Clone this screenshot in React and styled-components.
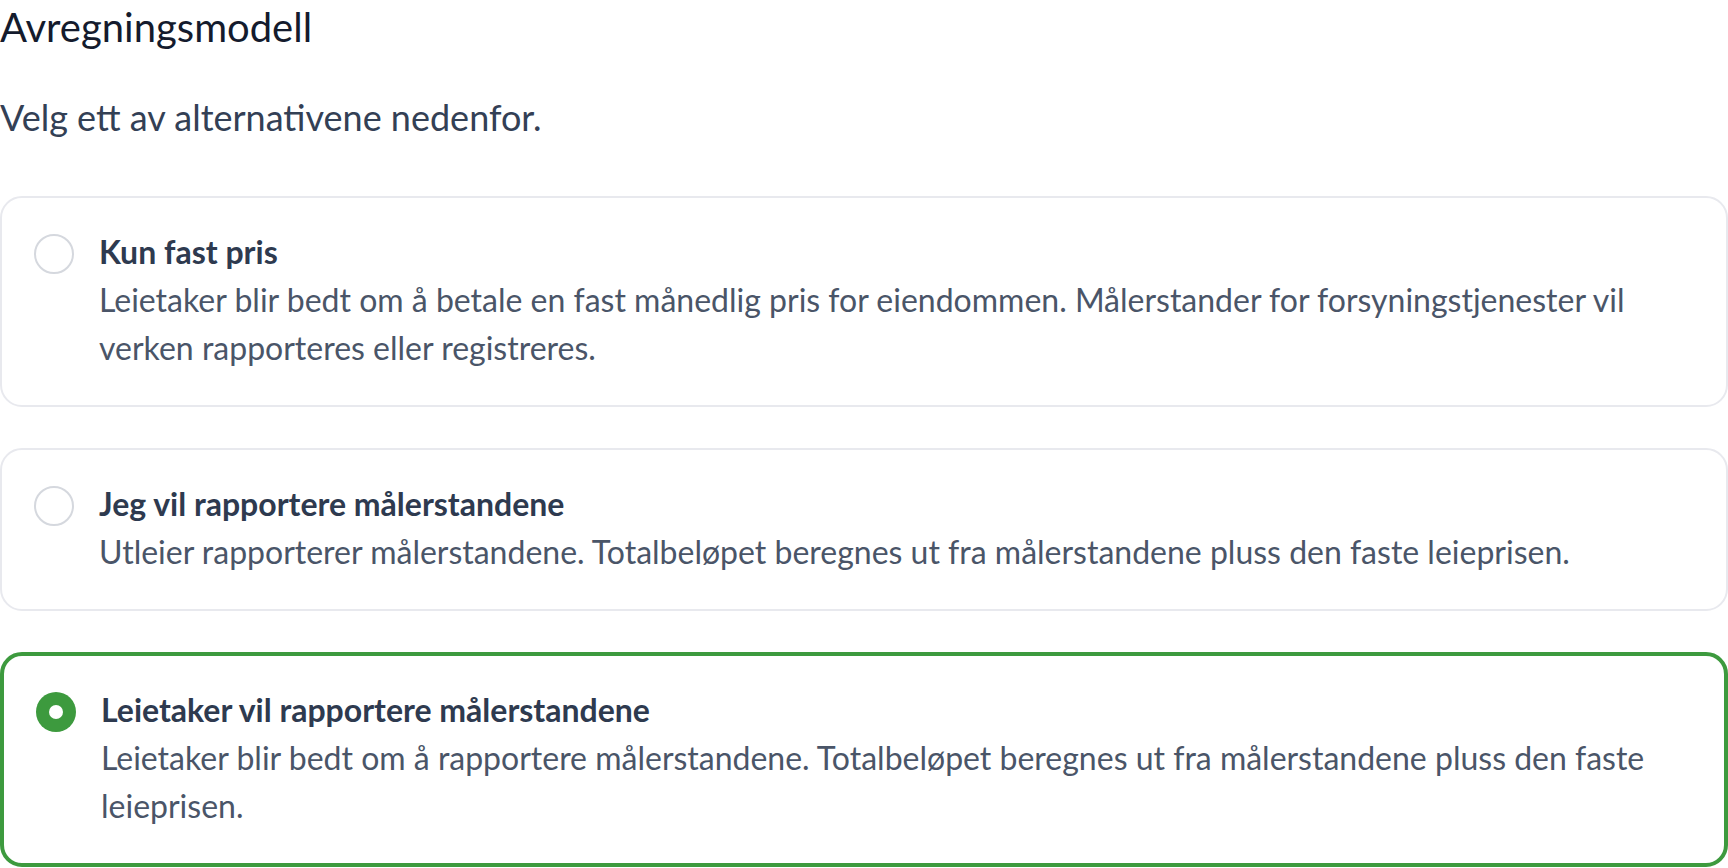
import React, { useState } from "react"
import styled, { createGlobalStyle } from "styled-components"

const GlobalStyle = createGlobalStyle`
    * {
        box-sizing: border-box;
    }

    body {
        margin: 0;
        background: #ffffff;
        font-family: "Lato", "Noto Sans", sans-serif;
    }
`

const Page = styled.div`
    width: 1728px;
`

const Title = styled.h1`
    margin: 0;
    font-size: 40px;
    font-weight: 400;
    line-height: 54px;
    color: #141b2d;
`

const Intro = styled.p`
    margin: 36px 0 52px;
    font-size: 36px;
    line-height: 54px;
    color: #334055;
`

const OptionList = styled.div`
    display: flex;
    flex-direction: column;
    gap: 41px;
`

const OptionCard = styled.label`
    display: flex;
    align-items: flex-start;
    gap: 25px;
    padding: 30px 32px 33px;
    border: ${props => (props.$selected ? "4px solid #3d9a3e" : "2px solid #e8e9ee")};
    border-radius: 22px;
    background: #ffffff;
    cursor: pointer;
`

const Radio = styled.span`
    flex: none;
    position: relative;
    width: 40px;
    height: 40px;
    margin-top: 6px;
    border-radius: 50%;
    border: ${props => (props.$checked ? "none" : "2px solid #d5d8de")};
    background: ${props => (props.$checked ? "#3d9a3e" : "#ffffff")};

    &::after {
        content: "";
        display: ${props => (props.$checked ? "block" : "none")};
        position: absolute;
        top: 13px;
        left: 13px;
        width: 14px;
        height: 14px;
        border-radius: 50%;
        background: #ffffff;
    }
`

const OptionText = styled.div`
    display: flex;
    flex-direction: column;
    min-width: 0;
`

const OptionTitle = styled.span`
    font-size: 32px;
    font-weight: 700;
    line-height: 48px;
    color: #2e3a4f;
`

const OptionDescription = styled.span`
    font-size: 32px;
    font-weight: 400;
    line-height: 48px;
    color: #4a5568;
`

const options = [
    {
        id: "fixed",
        title: "Kun fast pris",
        description:
            "Leietaker blir bedt om å betale en fast månedlig pris for eiendommen. Målerstander for forsyningstjenester vil verken rapporteres eller registreres.",
    },
    {
        id: "landlord",
        title: "Jeg vil rapportere målerstandene",
        description:
            "Utleier rapporterer målerstandene. Totalbeløpet beregnes ut fra målerstandene pluss den faste leieprisen.",
    },
    {
        id: "tenant",
        title: "Leietaker vil rapportere målerstandene",
        description:
            "Leietaker blir bedt om å rapportere målerstandene. Totalbeløpet beregnes ut fra målerstandene pluss den faste leieprisen.",
    },
]

const App = () => {
    const [selected, setSelected] = useState("tenant")

    return (
        <Page>
            <GlobalStyle />
            <Title>Avregningsmodell</Title>
            <Intro>Velg ett av alternativene nedenfor.</Intro>
            <OptionList role="radiogroup">
                {options.map(option => (
                    <OptionCard
                        key={option.id}
                        $selected={selected === option.id}
                        onClick={() => setSelected(option.id)}
                    >
                        <Radio $checked={selected === option.id} role="radio" aria-checked={selected === option.id} />
                        <OptionText>
                            <OptionTitle>{option.title}</OptionTitle>
                            <OptionDescription>{option.description}</OptionDescription>
                        </OptionText>
                    </OptionCard>
                ))}
            </OptionList>
        </Page>
    )
}

export default App
